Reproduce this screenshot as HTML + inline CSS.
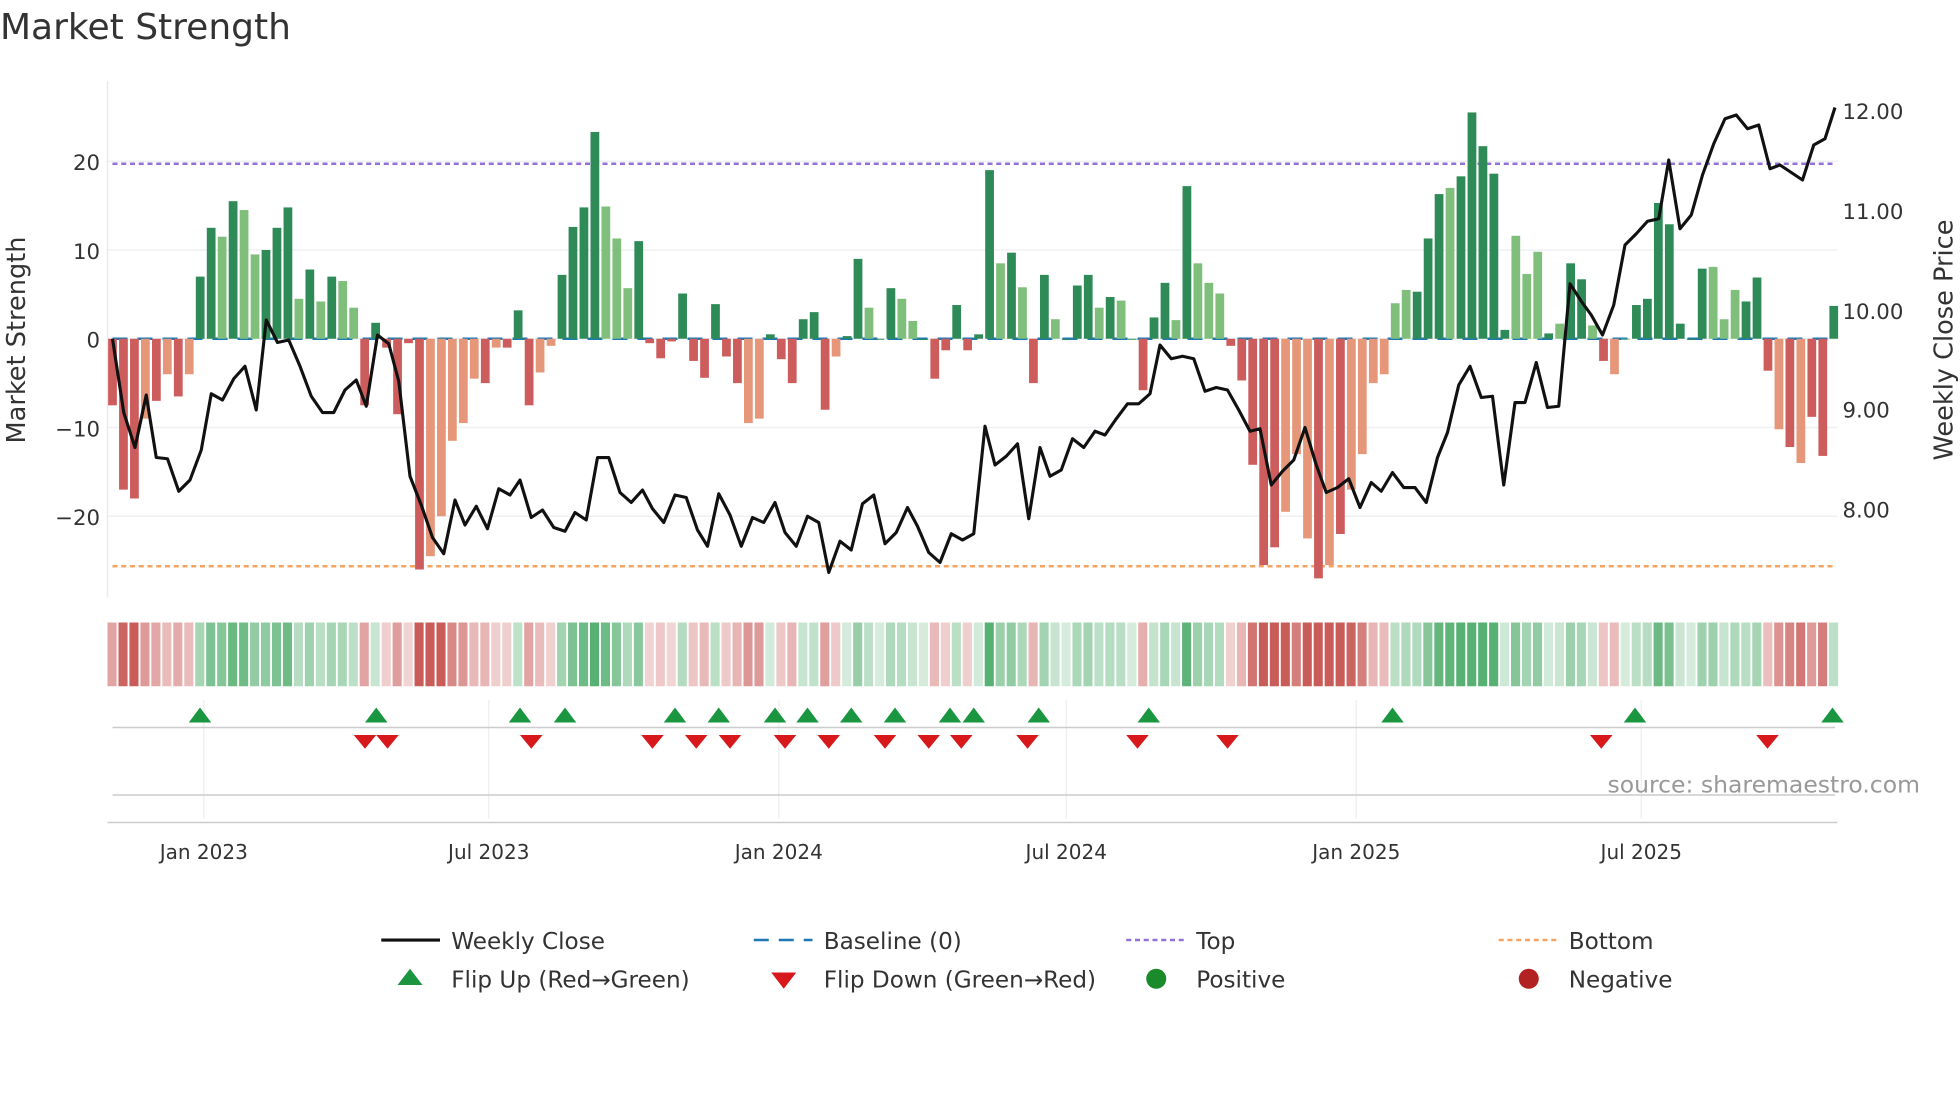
<!DOCTYPE html>
<html><head><meta charset="utf-8"><style>
html,body{margin:0;padding:0;background:#fff;width:1960px;height:1102px;overflow:hidden}
svg{display:block;font-family:"DejaVu Sans","Liberation Sans",sans-serif}
</style></head><body>
<svg id="s" width="1960" height="1102" viewBox="0 0 1568 881.6" xmlns="http://www.w3.org/2000/svg">
<text x="0" y="31" font-size="28.8" fill="#333">Market Strength</text>
<g id="grid"></g>
<g id="bars"></g>
<g id="heat"></g>
<g id="marks"></g>
<polyline id="price" fill="none" stroke="#111" stroke-width="2.5" stroke-linejoin="round"/>
<g font-size="17" fill="#333">
<text x="80" y="136" text-anchor="end">20</text>
<text x="80" y="207" text-anchor="end">10</text>
<text x="80" y="278" text-anchor="end">0</text>
<text x="80" y="349" text-anchor="end">−10</text>
<text x="80" y="420" text-anchor="end">−20</text>
<text x="1474" y="95">12.00</text>
<text x="1474" y="175">11.00</text>
<text x="1474" y="255">10.00</text>
<text x="1474" y="334">9.00</text>
<text x="1474" y="414">8.00</text>
<text transform="translate(20,272) rotate(-90)" text-anchor="middle" font-size="20.5">Market Strength</text>
<text transform="translate(1562,272) rotate(-90)" text-anchor="middle" font-size="20.5">Weekly Close Price</text>
<g font-size="16" text-anchor="middle">
<text x="163" y="687">Jan 2023</text><text x="391" y="687">Jul 2023</text><text x="623" y="687">Jan 2024</text>
<text x="853" y="687">Jul 2024</text><text x="1085" y="687">Jan 2025</text><text x="1313" y="687">Jul 2025</text>
</g>
<text x="1536" y="634" text-anchor="end" fill="#999" font-size="18.8">source: sharemaestro.com</text>
<g font-size="18.5">
<line x1="305" y1="752" x2="352" y2="752" stroke="#111" stroke-width="2.5"/><text x="361" y="759">Weekly Close</text>
<line x1="603" y1="752" x2="650" y2="752" stroke="#1f77b4" stroke-width="2" stroke-dasharray="12,8"/><text x="659" y="759">Baseline (0)</text>
<line x1="901" y1="752" x2="948" y2="752" stroke="#9370db" stroke-width="2" stroke-dasharray="4,3"/><text x="957" y="759">Top</text>
<line x1="1199" y1="752" x2="1246" y2="752" stroke="#f4a460" stroke-width="2" stroke-dasharray="4,3"/><text x="1255" y="759">Bottom</text>
<polygon points="318,788 338,788 328,775" fill="#1a9641"/><text x="361" y="790">Flip Up (Red→Green)</text>
<polygon points="617,778 637,778 627,791" fill="#d7191c"/><text x="659" y="790">Flip Down (Green→Red)</text>
<circle cx="925" cy="783" r="8" fill="#1a8a2a"/><text x="957" y="790">Positive</text>
<circle cx="1223" cy="783" r="8" fill="#b22222"/><text x="1255" y="790">Negative</text>
</g>
</g>
</svg>
<script>
var NS="http://www.w3.org/2000/svg";
function el(p,t,a){var e=document.createElementNS(NS,t);for(var k in a)e.setAttribute(k,a[k]);p.appendChild(e);return e;}
var g=document.getElementById('grid');
[129,200,271,342,413].forEach(function(y){el(g,'line',{x1:86,x2:1470,y1:y,y2:y,stroke:'#eef0f4','stroke-width':1.2});});
el(g,'line',{x1:86,x2:86,y1:65,y2:478,stroke:'#e8eaf0','stroke-width':1.2});
[163,391,623,853,1085,1313].forEach(function(x){el(g,'line',{x1:x,x2:x,y1:560,y2:655,stroke:'#eee','stroke-width':1});});
el(g,'line',{x1:90,x2:1468,y1:582,y2:582,stroke:'#ccc','stroke-width':1.2});
el(g,'line',{x1:90,x2:1468,y1:636,y2:636,stroke:'#ccc','stroke-width':1.2});
el(g,'line',{x1:86,x2:1470,y1:658,y2:658,stroke:'#ccc','stroke-width':1.2});
el(g,'line',{x1:90,x2:1468,y1:131,y2:131,stroke:'#9370db','stroke-width':2,'stroke-dasharray':'4,3'});
el(g,'line',{x1:90,x2:1468,y1:453,y2:453,stroke:'#f4a460','stroke-width':2,'stroke-dasharray':'4,3'});
el(g,'line',{x1:90,x2:1468,y1:271,y2:271,stroke:'#1f77b4','stroke-width':2,'stroke-dasharray':'12,8'});
var v=[-7.5,-17,-18,-9,-7,-4,-6.5,-4,7,12.5,11.5,15.5,14.5,9.5,10,12.5,14.8,4.5,7.8,4.2,7,6.5,3.5,-7.5,1.8,-1,-8.5,-0.5,-26,-24.5,-20,-11.5,-9.5,-4.5,-5,-1,-1,3.2,-7.5,-3.8,-0.8,7.2,12.6,14.8,23.3,14.9,11.3,5.7,11,-0.5,-2.2,-0.3,5.1,-2.5,-4.4,3.9,-2,-5,-9.5,-9,0.5,-2.3,-5,2.2,3,-8,-2,0.3,9,3.5,0,5.7,4.5,2,0,-4.5,-1.3,3.8,-1.3,0.5,19,8.5,9.7,5.8,-5,7.2,2.2,0,6,7.2,3.5,4.7,4.3,0,-5.8,2.4,6.3,2.1,17.2,8.5,6.3,5.1,-0.8,-4.7,-14.2,-25.5,-23.5,-19.5,-13,-22.5,-27,-25.5,-22,-17,-13,-5,-4,4,5.5,5.3,11.3,16.3,17,18.3,25.5,21.7,18.6,1,11.6,7.3,9.8,0.6,1.7,8.5,6.7,1.5,-2.5,-4,0,3.8,4.5,15.3,12.9,1.7,0,7.9,8.1,2.2,5.5,4.2,6.9,-3.6,-10.2,-12.2,-14,-8.8,-13.2,3.7];
var light={3:1,5:1,7:1,10:1,12:1,13:1,17:1,19:1,21:1,22:1,29:1,30:1,31:1,32:1,33:1,35:1,39:1,40:1,45:1,46:1,47:1,58:1,59:1,66:1,69:1,72:1,73:1,81:1,83:1,86:1,90:1,92:1,97:1,99:1,100:1,101:1,107:1,108:1,109:1,111:1,113:1,114:1,115:1,116:1,117:1,118:1,122:1,128:1,129:1,130:1,132:1,135:1,137:1,138:1,146:1,147:1,148:1,152:1,154:1,160:1};
var n=v.length, step=(1467-90)/(n-1);
var b=document.getElementById('bars'), h=document.getElementById('heat');
var hstep=(1472-86)/n;
for(var i=0;i<n;i++){
 var x=90+i*step, val=v[i], y=271-val*7.1, pos=val>=0, L=light[i];
 var c=pos?(L?'#7fbf7b':'#2e8b57'):(L?'#e6977a':'#cd5c5c');
 el(b,'rect',{x:x-3.5,y:Math.min(y,271),width:7,height:Math.max(Math.abs(val*7.1),0.8),fill:c});
 var a=Math.min(1,0.25+Math.abs(val)/24);
 el(h,'rect',{x:86+i*hstep,y:498,width:hstep-1.5,height:51,fill:pos?'#3aa35a':'#c0403c','fill-opacity':(a*0.85).toFixed(2)});
}
var m=document.getElementById('marks');
[160,301,416,452,540,575,620,646,681,716,760,779,831,919,1114,1308,1466].forEach(function(x){el(m,'polygon',{points:(x-9)+',578 '+(x+9)+',578 '+x+',566',fill:'#1a9641'});});
[292,310,425,522,557,584,628,663,708,743,769,822,910,982,1281,1414].forEach(function(x){el(m,'polygon',{points:(x-9)+',588 '+(x+9)+',588 '+x+',599',fill:'#d7191c'});});
var pts="90,271 99,330 108,358 117,316 125,366 134,367 143,393 152,384 161,360 169,315 178,320 187,303 196,293 205,328 213,256 222,274 231,272 240,293 249,317 258,330 267,330 276,312 285,304 293,325 302,268 311,275 319,305 328,381 337,404 346,430 355,443 364,400 372,420 381,405 390,423 399,391 408,396 416,384 425,414 434,408 443,422 452,425 460,410 469,416 478,366 487,366 496,394 505,402 514,392 522,407 531,418 540,396 549,398 558,424 566,437 575,395 584,412 593,437 602,414 611,418 620,402 628,426 637,437 646,413 655,418 663,458 672,433 681,440 690,403 699,396 708,435 717,426 726,406 734,421 743,442 752,450 761,427 770,432 779,427 788,341 796,372 805,365 814,355 823,415 832,358 840,381 849,376 858,351 867,358 876,345 884,348 893,335 902,323 911,323 920,315 928,276 937,287 946,285 955,287 964,313 973,310 982,312 991,328 1000,345 1008,343 1017,388 1026,377 1035,368 1044,342 1053,372 1061,394 1070,390 1079,383 1088,406 1097,386 1105,393 1114,378 1123,390 1132,390 1141,402 1150,366 1158,346 1167,308 1176,293 1185,318 1194,317 1203,388 1212,322 1220,322 1229,290 1238,326 1247,325 1256,227 1265,241 1273,252 1282,268 1291,244 1300,196 1309,187 1318,177 1327,175 1335,128 1344,183 1353,172 1362,140 1371,115 1380,95 1389,92 1398,103 1407,100 1416,135 1424,132 1433,138 1442,144 1451,116 1460,111 1468,86";
document.getElementById('price').setAttribute('points',pts);
</script>
</body></html>
